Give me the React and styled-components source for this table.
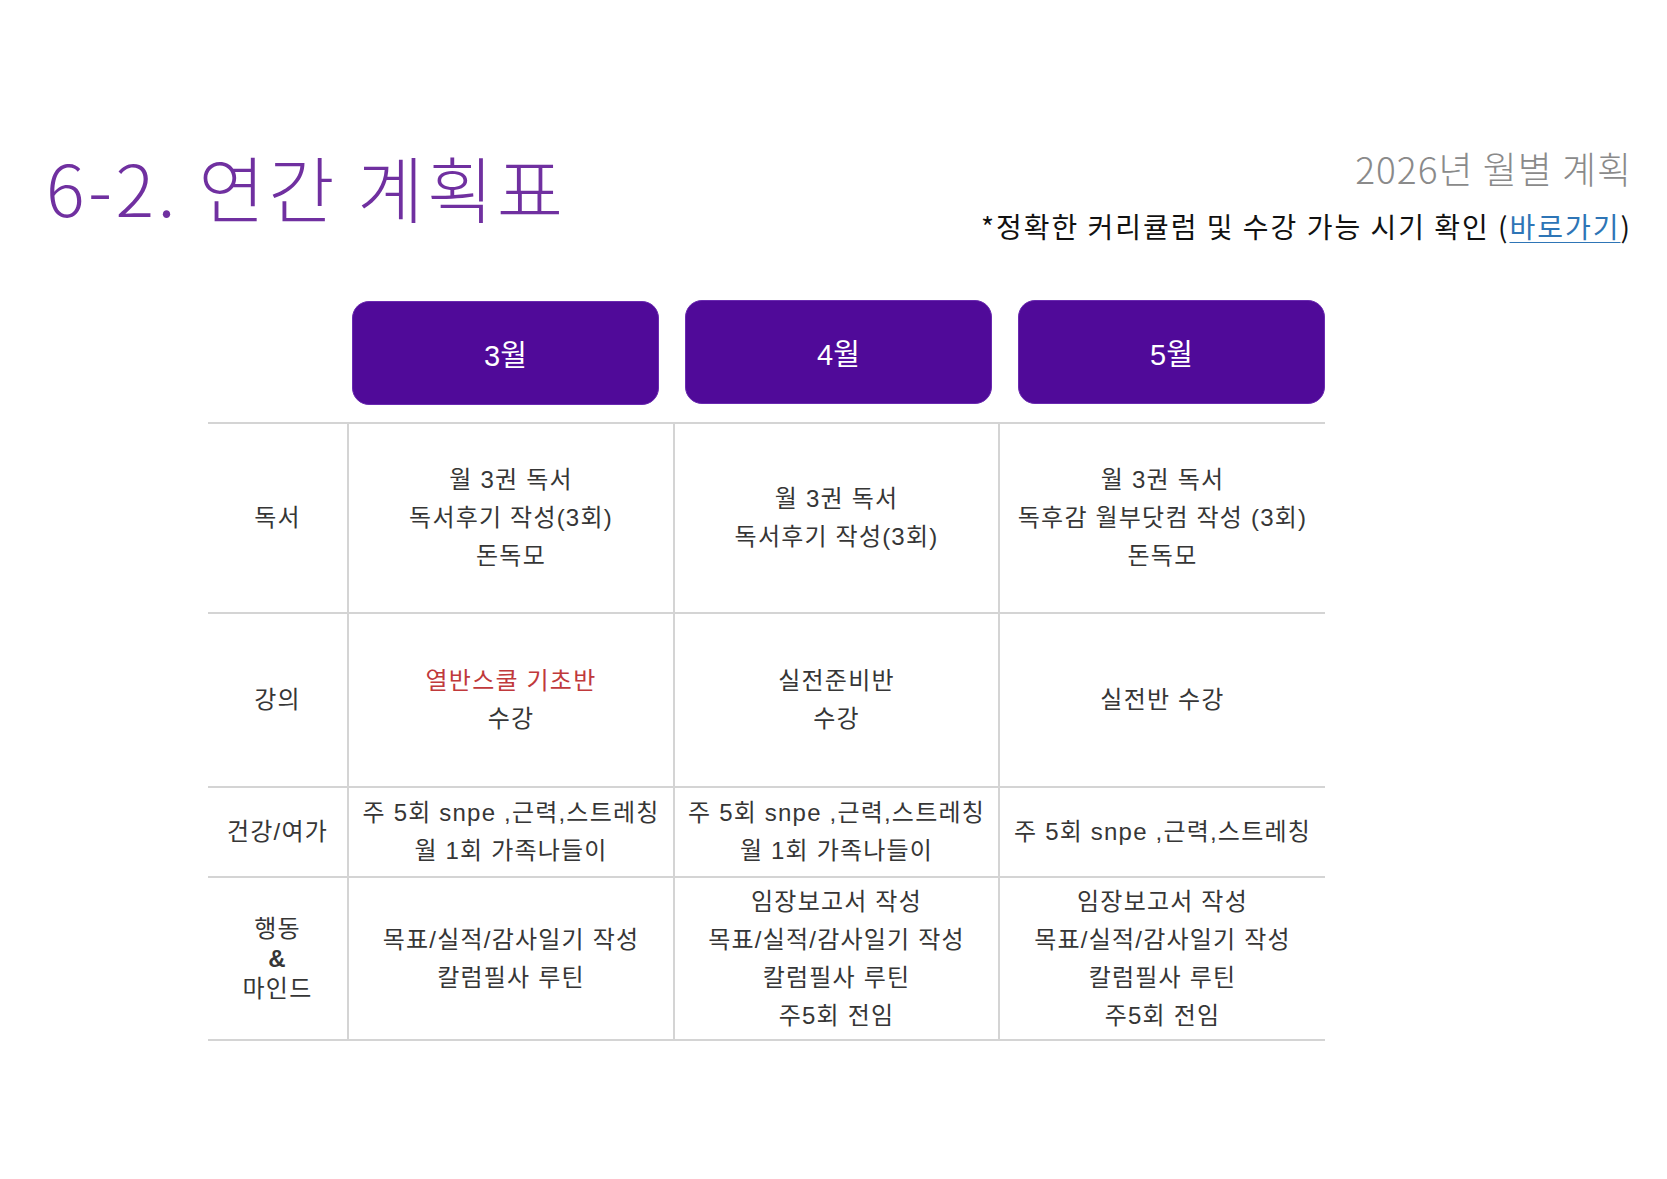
import React from 'react';
import styled, { createGlobalStyle } from 'styled-components';

const GlobalStyle = createGlobalStyle`
  html, body {
    margin: 0;
    padding: 0;
    background: #ffffff;
  }
  body {
    font-family: "Liberation Sans", "Noto Sans CJK KR", sans-serif;
  }
`;

const Page = styled.div`
  width: 1667px;
  height: 1179px;
  box-sizing: border-box;
  padding: 150px 35px 0 46px;
  background: #ffffff;
`;

const Header = styled.div`
  display: flex;
  justify-content: space-between;
  align-items: flex-start;
`;

const Title = styled.h1`
  margin: 0;
  font-family: "Noto Sans CJK KR", sans-serif;
  font-weight: 300;
  font-size: 72px;
  line-height: 1;
  letter-spacing: 3.5px;
  color: #7030a0;
`;

const HeaderRight = styled.div`
  display: flex;
  flex-direction: column;
  align-items: flex-end;
`;

const Subtitle = styled.div`
  font-family: "Noto Sans CJK KR", sans-serif;
  font-weight: 300;
  font-size: 37px;
  line-height: 1;
  letter-spacing: 1px;
  color: #8a8a8a;
`;

const Note = styled.div`
  margin-top: 25px;
  font-family: "Noto Sans CJK KR", sans-serif;
  font-size: 28px;
  line-height: 1;
  letter-spacing: 2px;
  color: #111111;
`;

const Link = styled.a`
  color: #2e75b6;
  text-decoration: underline;
  text-underline-offset: 4px;
  text-decoration-thickness: 1px;
`;

const Plan = styled.div`
  margin: 61px 0 0 162px;
  width: 1117px;
`;

const MonthRow = styled.div`
  display: grid;
  grid-template-columns: repeat(3, 307px);
  column-gap: 26px;
  padding-left: 144px;
  margin-bottom: 17px;
`;

const MonthBox = styled.div`
  height: 104px;
  border-radius: 17px;
  background: #500a99;
  border: 1px solid #6a2ab0;
  box-sizing: border-box;
  display: flex;
  align-items: center;
  justify-content: center;
  color: #ffffff;
  font-size: 29px;
  margin-top: ${p => (p.$up ? '-1px' : '0')};
`;

const Table = styled.div`
  display: grid;
  grid-template-columns: 139px 326px 325px 327px;
  grid-template-rows: 190px 174px 90px 163px;
  border-top: 2px solid #d4d4d4;
`;

const Cell = styled.div`
  display: flex;
  flex-direction: column;
  align-items: center;
  justify-content: center;
  text-align: center;
  border-bottom: 2px solid #d4d4d4;
  border-left: ${p => (p.$label ? 'none' : '2px solid #d4d4d4')};
  font-size: 24px;
  letter-spacing: 1.2px;
  line-height: ${p => (p.$tight ? '30px' : '38px')};
  color: #363636;
  white-space: nowrap;
`;

const Line = styled.span`
  color: ${p => (p.$red ? '#c0393b' : 'inherit')};
  font-weight: ${p => (p.$bold ? 700 : 400)};
`;

const months = ['3월', '4월', '5월'];

const rows = [
  {
    label: [{ t: '독서' }],
    cells: [
      [{ t: '월 3권 독서' }, { t: '독서후기 작성(3회)' }, { t: '돈독모' }],
      [{ t: '월 3권 독서' }, { t: '독서후기 작성(3회)' }],
      [{ t: '월 3권 독서' }, { t: '독후감 월부닷컴 작성 (3회)' }, { t: '돈독모' }],
    ],
  },
  {
    label: [{ t: '강의' }],
    cells: [
      [{ t: '열반스쿨 기초반', red: true }, { t: '수강' }],
      [{ t: '실전준비반' }, { t: '수강' }],
      [{ t: '실전반 수강' }],
    ],
  },
  {
    label: [{ t: '건강/여가' }],
    cells: [
      [{ t: '주 5회 snpe ,근력,스트레칭' }, { t: '월 1회 가족나들이' }],
      [{ t: '주 5회 snpe ,근력,스트레칭' }, { t: '월 1회 가족나들이' }],
      [{ t: '주 5회 snpe ,근력,스트레칭' }],
    ],
  },
  {
    label: [{ t: '행동' }, { t: '&', bold: true }, { t: '마인드' }],
    tight: true,
    cells: [
      [{ t: '목표/실적/감사일기 작성' }, { t: '칼럼필사 루틴' }],
      [{ t: '임장보고서 작성' }, { t: '목표/실적/감사일기 작성' }, { t: '칼럼필사 루틴' }, { t: '주5회 전임' }],
      [{ t: '임장보고서 작성' }, { t: '목표/실적/감사일기 작성' }, { t: '칼럼필사 루틴' }, { t: '주5회 전임' }],
    ],
  },
];

const renderLines = lines =>
  lines.map((l, i) => (
    <Line key={i} $red={l.red} $bold={l.bold}>
      {l.t}
    </Line>
  ));

const App = () => {
  return (
    <>
      <GlobalStyle />
      <Page>
        <Header>
          <Title>6-2. 연간 계획표</Title>
          <HeaderRight>
            <Subtitle>2026년 월별 계획</Subtitle>
            <Note>
              *정확한 커리큘럼 및 수강 가능 시기 확인 (<Link href="#">바로가기</Link>)
            </Note>
          </HeaderRight>
        </Header>
        <Plan>
          <MonthRow>
            {months.map((m, i) => (
              <MonthBox key={m} $up={i > 0}>
                {m}
              </MonthBox>
            ))}
          </MonthRow>
          <Table>
            {rows.map((r, ri) => (
              <React.Fragment key={ri}>
                <Cell $label $tight={r.tight}>
                  {renderLines(r.label)}
                </Cell>
                {r.cells.map((c, ci) => (
                  <Cell key={ci}>{renderLines(c)}</Cell>
                ))}
              </React.Fragment>
            ))}
          </Table>
        </Plan>
      </Page>
    </>
  );
};

export default App;
